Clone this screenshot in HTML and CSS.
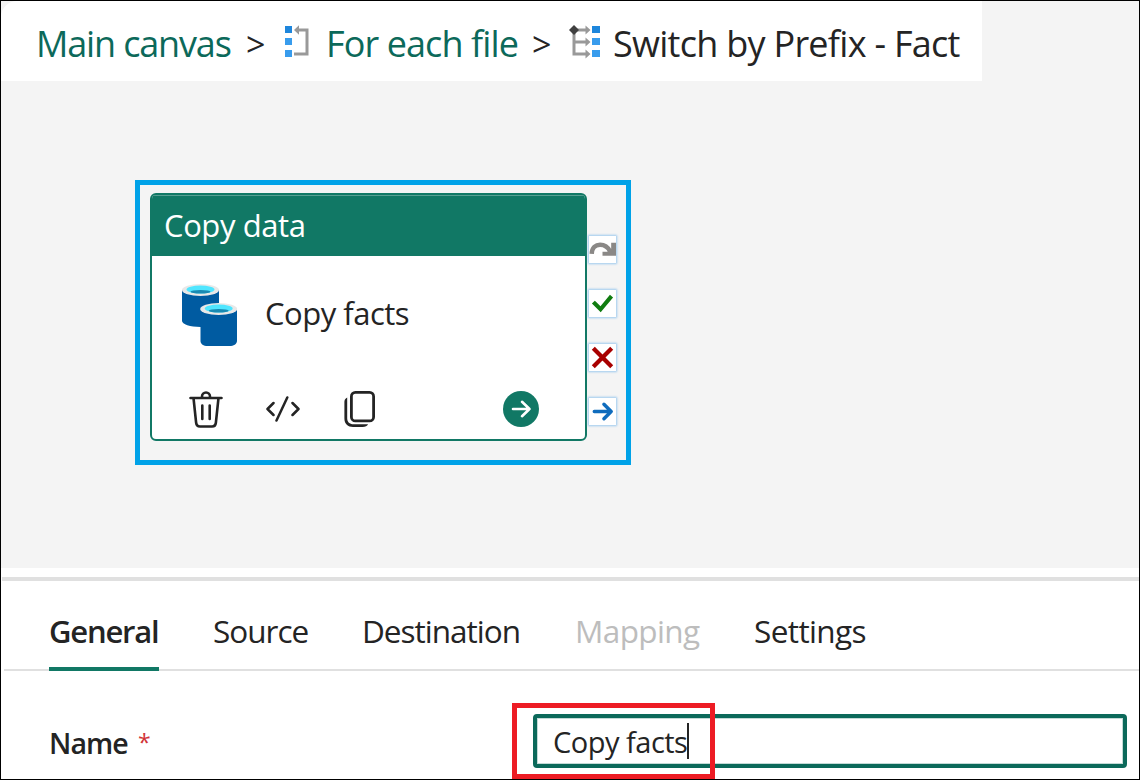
FILE: index.html
```html
<!DOCTYPE html>
<html lang="en">
<head>
<meta charset="utf-8">
<title>Pipeline editor</title>
<link rel="stylesheet" href="styles.css">
</head>
<body>
<div class="app">
  <main class="canvas">
    <nav class="crumbs">
      <a class="crumb crumb-main">Main canvas</a>
      <span class="chevron">&gt;</span>
      <svg class="icon-loop" viewBox="0 0 26 34"><path fill="#1e86dc" d="M1 1h7v7H1z"/><path fill="#389ced" d="M1 13h7v7H1zM1 25h7v7H1z"/><path d="M14 5h9v24H10" fill="none" stroke="#999" stroke-width="3"/><path d="M10 5 15 .2v9.600z" fill="#999"/></svg>
      <a class="crumb crumb-loop">For each file</a>
      <span class="chevron chevron-b">&gt;</span>
      <svg class="icon-switch" viewBox="0 0 32 34"><path d="M5 5v24h12M5 17h12M5 5h12" fill="none" stroke="#999" stroke-width="3"/><path d="M16.500 .5 21.500 5 16.500 9.500zM16.500 12.500 21.500 17 16.500 21.500zM16.500 24.500 21.500 29 16.500 33.500z" fill="#999"/><path d="M5 0 10 5 5 10 0 5z" fill="#404040"/><path fill="#1e86dc" d="M23 1h8v7h-8z"/><path fill="#389ced" d="M23 13h8v7h-8zM23 25h8v7h-8z"/></svg>
      <span class="crumb crumb-current">Switch by Prefix - Fact</span>
    </nav>

    <section class="node-frame">
      <article class="node">
        <header class="node-head">Copy data</header>
        <div class="node-body">
          <svg class="icon-copy-data" viewBox="0 0 56 62">
            <path d="M0 6v31c0 3 8 6 18.500 6S37 40 37 37V6z" fill="#005ba1"/>
            <ellipse cx="18.500" cy="6" rx="18.500" ry="6" fill="#e8e8e8"/>
            <ellipse cx="18.500" cy="5.500" rx="14" ry="4" fill="#50e6ff"/>
            <ellipse cx="18.500" cy="7.700" rx="10" ry="1.800" fill="#198ab3"/>
            <path d="M18.500 25v32c0 3 3 5 7 5h22c4 0 7.500-2 7.500-5V25z" fill="#005ba1"/>
            <ellipse cx="36.700" cy="25" rx="18.500" ry="6" fill="#e8e8e8"/>
            <ellipse cx="36.700" cy="24.500" rx="14" ry="4" fill="#50e6ff"/>
            <ellipse cx="36.700" cy="26.700" rx="10" ry="1.800" fill="#198ab3"/>
          </svg>
          <span class="node-name">Copy facts</span>
        </div>
        <footer class="node-tools">
          <svg class="icon-trash" viewBox="0 0 34 37"><g fill="none" stroke="#242424" stroke-width="2.600" stroke-linecap="round" stroke-linejoin="round"><path d="M1.500 7h31M13 7V5.500a4 4 0 0 1 8 0V7M4.500 7l2.600 24.500Q7.500 35.500 11 35.500h12q3.500 0 3.900-4L29.500 7M13.300 14.500v13.500M20.700 14.500v13.500"/></g></svg>
          <svg class="icon-code" viewBox="0 0 34 26"><path d="M7.500 7 1.500 13l6 6M26.500 7l6 6-6 6M21.300 1.500 10.500 24.500" fill="none" stroke="#242424" stroke-width="2.500" stroke-linecap="round" stroke-linejoin="round"/></svg>
          <svg class="icon-clone" viewBox="0 0 31 37"><rect x="7.400" y="1.400" width="22.200" height="28.500" rx="4" fill="none" stroke="#242424" stroke-width="2.800"/><path d="M3.200 6.500C1 8 .4 9 .4 11v16.500C.4 33 4 36 9 36h9.500c3 0 4.500-1 5.600-2.800H9.500c-4 0-6.300-2.200-6.300-6z" fill="#242424"/></svg>
          <svg class="icon-go" viewBox="0 0 36 36"><circle cx="18" cy="18" r="18" fill="#117865"/><path d="M10 18H26.500M19 10.800l7.500 7.200-7.500 7.200" fill="none" stroke="#fff" stroke-width="2.600" stroke-linecap="round" stroke-linejoin="round"/></svg>
        </footer>
      </article>
      <div class="ports">
        <svg class="port" viewBox="0 0 28 28"><path d="M2.800 18.500C3 12 7 9 11.500 9S19.500 11 22 16" fill="none" stroke="#8a8886" stroke-width="4.600"/><path d="M28 7v13.500H14V16.300h5l4-3V7z" fill="#8a8886"/></svg>
        <svg class="port" viewBox="0 0 28 28"><path d="M6 14l6 6L22 8" fill="none" stroke="#107c10" stroke-width="4.200" stroke-linecap="square"/></svg>
        <svg class="port" viewBox="0 0 28 28"><path d="M6 6l16 16M22 6 6 22" fill="none" stroke="#a80000" stroke-width="4.400" stroke-linecap="square"/></svg>
        <svg class="port" viewBox="0 0 28 28"><path d="M5.500 14h17.500M15.500 6.500 23 14l-7.500 7.500" fill="none" stroke="#0f6cbd" stroke-width="3.600" stroke-linecap="round" stroke-linejoin="round"/></svg>
      </div>
    </section>
  </main>

  <section class="panel">
    <div class="tabs">
      <span class="tab tab-general active">General</span>
      <span class="tab tab-source">Source</span>
      <span class="tab tab-destination">Destination</span>
      <span class="tab tab-mapping">Mapping</span>
      <span class="tab tab-settings">Settings</span>
    </div>
    <div class="field">
      <span class="label">Name</span><span class="required">*</span>
      <div class="input"><span class="value">Copy facts</span><span class="caret"></span></div>
      <div class="callout"></div>
    </div>
  </section>
</div>
</body>
</html>
```
FILE: styles.css
```css
* { box-sizing: border-box; }
body {
  margin: 0;
  font-family: "Open Sans", "Noto Sans", sans-serif;
  color: #242424;
}
svg { display: block; flex: none; }
.app {
  width: 1140px;
  height: 780px;
  border: 1px solid #000;
  background: #fff;
  display: flex;
  flex-direction: column;
  overflow: hidden;
}
.canvas {
  position: relative;
  height: 567px;
  flex: none;
  background: #f4f4f4;
}
.crumbs {
  width: 981px;
  height: 80px;
  padding: 5px 0 0 35px;
  display: flex;
  align-items: center;
  background: #fff;
  border-top-left-radius: 16px;
  font-size: 36px;
  white-space: nowrap;
}
.crumb { flex: none; }
.crumb-main { width: 210px; color: #0c695a; letter-spacing: -1.15px; }
.crumb-loop { width: 206px; color: #0c695a; letter-spacing: -.9px; }
.crumb-current { letter-spacing: -.72px; }
.chevron { width: 39px; margin-top: 1px; font-size: 34px; }
.chevron-b { width: 37px; }
.icon-loop { width: 26px; height: 34px; margin: -4px 16px 0 -1px; }
.icon-switch { width: 32px; height: 34px; margin: -4px 12px 0 0; }

.node-frame {
  position: absolute;
  left: 134px;
  top: 179px;
  width: 496px;
  height: 285px;
  border: 5px solid #00a2e8;
  padding: 8px 0 0 10px;
  display: flex;
}
.node {
  width: 437px;
  height: 248px;
  border: 2px solid #117865;
  border-radius: 6px;
  background: #fff;
  overflow: hidden;
}
.node-head {
  height: 61px;
  padding-left: 12px;
  background: #117865;
  border-top: 1px solid #579f92;
  color: #fff;
  font-size: 31px;
  line-height: 59px;
  letter-spacing: -.4px;
}
.node-body {
  height: 118px;
  padding-left: 30px;
  display: flex;
  align-items: center;
}
.icon-copy-data { width: 56px; height: 62px; }
.node-name { margin: -4px 0 0 27px; font-size: 31px; line-height: 42px; letter-spacing: -.5px; }
.node-tools {
  height: 70px;
  padding: 0 46px 0 37px;
  display: flex;
  align-items: center;
}
.icon-trash { width: 34px; height: 37px; }
.icon-code { width: 34px; height: 26px; margin-left: 43px; }
.icon-clone { width: 31px; height: 37px; margin-left: 44px; }
.icon-go { width: 36px; height: 36px; margin-left: auto; }
.ports {
  padding: 43px 0 0 2px;
  display: flex;
  flex-direction: column;
  gap: 27px;
}
.port { width: 27px; height: 27px; background: #fff; box-shadow: 0 0 2px 1px #9cc9ee; }

.panel {
  flex: none;
  height: 211px;
  padding-top: 9px;
}
.tabs {
  height: 94px;
  margin-left: 1px;
  padding: 14px 0 0 47px;
  border-top: 4px solid #e0e0e0;
  display: flex;
  font-size: 31.5px;
  line-height: 72px;
  white-space: nowrap;
  background: linear-gradient(#e0e0e0, #e0e0e0) 2px 100% / 100% 2px no-repeat;
}
.tab { flex: none; height: 76px; }
.tab-general { width: 110px; margin-right: 54px; font-size: 31px; font-weight: 600; letter-spacing: -1.2px; }
.active { border-bottom: 4px solid #117865; }
.tab-source { width: 149px; letter-spacing: -1px; }
.tab-destination { width: 213px; letter-spacing: -1px; }
.tab-mapping { width: 179px; color: #bdbdbd; letter-spacing: -.6px; }
.tab-settings { letter-spacing: -.6px; }

.field {
  position: relative;
  height: 108px;
  padding: 43px 0 0 48px;
  display: flex;
  font-size: 29px;
  line-height: 58px;
}
.label { width: 89px; font-size: 28.5px; font-weight: 600; letter-spacing: -.9px; }
.required { width: 395px; color: #d13438; font-size: 23px; line-height: 57px; }
.input {
  width: 594px;
  height: 54px;
  padding-left: 16px;
  border: 4px solid #0c695a;
  border-radius: 4px;
  box-shadow: inset 0 0 0 1px #c3dad6;
  display: flex;
  line-height: 48px;
}
.value { width: 134px; white-space: nowrap; letter-spacing: -.5px; }
.caret { width: 2px; height: 36px; margin-top: 5px; background: #242424; }
.callout {
  position: absolute;
  left: 511px;
  top: 32px;
  width: 203px;
  height: 76px;
  border: 5px solid #ed1c24;
}
```
